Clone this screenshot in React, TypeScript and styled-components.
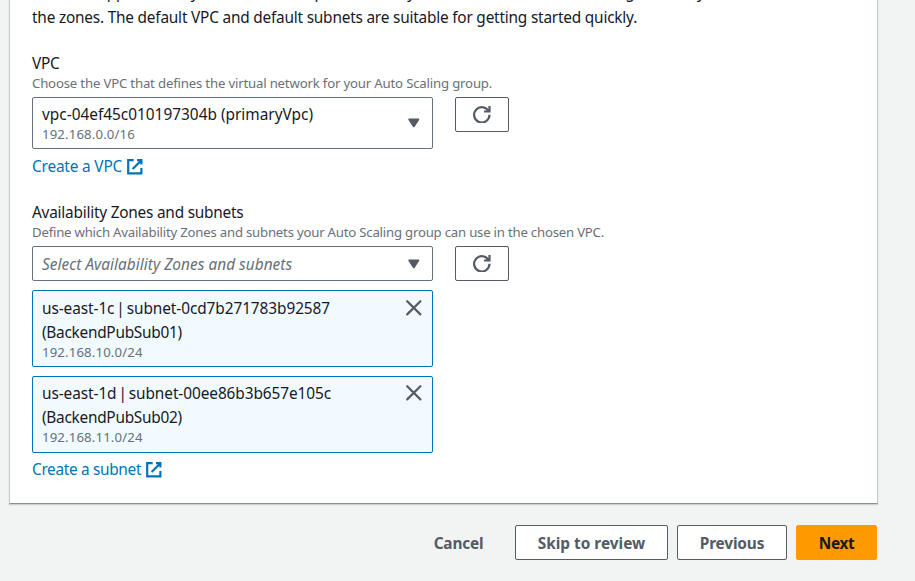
import React from 'react';
import styled, { createGlobalStyle } from 'styled-components';

const GlobalStyle = createGlobalStyle`
  *, *::before, *::after { box-sizing: border-box; }
  body {
    margin: 0;
    background: #f2f3f3;
    color: #16191f;
    font: 15.4px/24px 'Noto Sans', 'Open Sans', sans-serif;
    overflow: hidden;
  }
`;

const Page = styled.div`
  width: 915px;
  height: 581px;
  padding: 0 37px 0 9px;
  overflow: hidden;
`;

const Card = styled.section`
  height: 504px;
  padding: 0 22px;
  background: #fff;
  border: solid #c5cacd;
  border-width: 0 1px 1px;
  border-bottom-color: #879196;
  box-shadow: 0 1px 1px rgba(0, 28, 36, 0.16);
  display: flex;
  flex-direction: column;
`;

const Intro = styled.p`
  margin: -19px 0 22px;
  display: flex;
  flex-direction: column;
  gap: 1px;
  white-space: nowrap;
  letter-spacing: -0.21px;
`;

const Field = styled.div<{ $spaceAfter?: number }>`
  display: flex;
  flex-direction: column;
  white-space: nowrap;
  margin-bottom: ${(p) => p.$spaceAfter ?? 0}px;
`;

const Label = styled.label`
  line-height: 24px;
  margin-bottom: -2px;
  letter-spacing: -0.23px;
`;

const Description = styled.div<{ $tracking: number }>`
  font-size: 13.2px;
  line-height: 18px;
  letter-spacing: ${(p) => p.$tracking}px;
  color: #687078;
  margin-bottom: 5px;
`;

const ControlRow = styled.div`
  display: flex;
  align-items: flex-start;
  gap: 22px;
`;

const Select = styled.div<{ $height: number }>`
  width: 401px;
  height: ${(p) => p.$height}px;
  padding: 0 9px;
  border: 1px solid #687078;
  border-radius: 2px;
  background: #fff;
  display: flex;
  align-items: center;
  justify-content: space-between;
`;

const Selected = styled.div`
  display: flex;
  flex-direction: column;
  line-height: 23px;
`;

const Secondary = styled.span<{ $leading?: number }>`
  font-size: 13.2px;
  line-height: ${(p) => p.$leading ?? 17}px;
  letter-spacing: 0.14px;
  color: #687078;
`;

const Placeholder = styled.span`
  padding-top: 2px;
  font-style: italic;
  letter-spacing: 0.03px;
  color: #687078;
`;

const Button = styled.button<{ $variant?: 'normal' | 'link' | 'primary'; $width: number; $tracking?: number }>`
  width: ${(p) => p.$width}px;
  height: 35px;
  padding: 2px 0 0;
  display: flex;
  align-items: center;
  justify-content: center;
  font: bold 15.4px/24px 'Noto Sans', 'Open Sans', sans-serif;
  letter-spacing: ${(p) => p.$tracking ?? 0}px;
  white-space: nowrap;
  color: ${(p) => (p.$variant === 'primary' ? '#16191f' : '#545b64')};
  background: ${(p) => (p.$variant === 'primary' ? '#ff9900' : p.$variant === 'link' ? 'transparent' : '#fff')};
  border: 1px solid
    ${(p) => (p.$variant === 'primary' ? '#ff9900' : p.$variant === 'link' ? 'transparent' : '#545b64')};
  border-radius: 2px;
`;

const IconButton = styled(Button)`
  padding: 0;
`;

const Link = styled.a<{ $tracking: number }>`
  margin-top: 6px;
  align-self: flex-start;
  display: flex;
  gap: 4px;
  color: #0073bb;
  letter-spacing: ${(p) => p.$tracking}px;
`;

const TokenList = styled.div`
  padding-top: 9.4px;
  height: 171px;
  display: flex;
  flex-direction: column;
  gap: 8.8px;
`;

const Token = styled.div`
  width: 401px;
  height: 76.8px;
  flex: none;
  padding: 5.4px 9px 0;
  display: flex;
  justify-content: space-between;
  background: #f1faff;
  border: 1px solid #0073bb;
  border-radius: 2px;
`;

const TokenText = styled.div`
  display: flex;
  flex-direction: column;
`;

const TokenName = styled.span<{ $tracking?: number }>`
  letter-spacing: ${(p) => p.$tracking ?? -0.08}px;
  word-spacing: -2px;
`;

const Icon = styled.svg`
  width: 17.6px;
  height: 17.6px;
  flex: none;
  fill: none;
  stroke: currentColor;
  stroke-width: 2;
`;

const ControlIcon = styled(Icon)`
  color: #545b64;
`;

const ExternalMark = styled(Icon)`
  margin-top: 2.6px;
`;

const CloseMark = styled(Icon)`
  color: #545b64;
  margin-top: 2px;
`;

const Actions = styled.footer`
  padding: 21px 1px 0 0;
  display: flex;
  justify-content: flex-end;
  gap: 9px;
`;

const ExternalIcon = () => (
  <ExternalMark viewBox="0 0 16 16">
    <path d="M10 2h4v4M6 10l8-8M14 9.05V14H2V2h5" />
  </ExternalMark>
);

const CaretIcon = () => (
  <ControlIcon viewBox="0 0 16 16">
    <path d="M4 5h8l-4 6z" fill="currentColor" strokeLinejoin="round" />
  </ControlIcon>
);

const RefreshButton = () => (
  <IconButton $width={54} aria-label="Refresh">
    <Icon viewBox="0 0 16 16">
      <path d="M10 5h5V0M15 8a7 7 0 1 1-.7-3" />
    </Icon>
  </IconButton>
);

const subnets = [
  { id: 'us-east-1c | subnet-0cd7b271783b92587', name: '(BackendPubSub01)', cidr: '192.168.10.0/24' },
  { id: 'us-east-1d | subnet-00ee86b3b657e105c', name: '(BackendPubSub02)', cidr: '192.168.11.0/24' },
];

export default function App() {
  return (
    <Page>
      <GlobalStyle />
      <Card>
        <Intro>
          <span>For most applications, you can use multiple Availability Zones and let EC2 Auto Scaling balance your instances across</span>
          <span>the zones. The default VPC and default subnets are suitable for getting started quickly.</span>
        </Intro>
        <Field $spaceAfter={22}>
          <Label>VPC</Label>
          <Description $tracking={-0.18}>Choose the VPC that defines the virtual network for your Auto Scaling group.</Description>
          <ControlRow>
            <Select $height={52}>
              <Selected>
                <span>vpc-04ef45c010197304b (primaryVpc)</span>
                <Secondary>192.168.0.0/16</Secondary>
              </Selected>
              <CaretIcon />
            </Select>
            <RefreshButton />
          </ControlRow>
          <Link $tracking={-0.18}>
            Create a VPC
            <ExternalIcon />
          </Link>
        </Field>
        <Field>
          <Label>Availability Zones and subnets</Label>
          <Description $tracking={-0.215}>Define which Availability Zones and subnets your Auto Scaling group can use in the chosen VPC.</Description>
          <ControlRow>
            <Select $height={35}>
              <Placeholder>Select Availability Zones and subnets</Placeholder>
              <CaretIcon />
            </Select>
            <RefreshButton />
          </ControlRow>
          <TokenList>
            {subnets.map((s) => (
              <Token key={s.id}>
                <TokenText>
                  <TokenName>{s.id}</TokenName>
                  <TokenName $tracking={-0.27}>{s.name}</TokenName>
                  <Secondary $leading={15}>{s.cidr}</Secondary>
                </TokenText>
                <CloseMark viewBox="0 0 16 16">
                  <path d="M2 2l12 12M14 2L2 14" strokeLinecap="round" />
                </CloseMark>
              </Token>
            ))}
          </TokenList>
          <Link $tracking={-0.33}>
            Create a subnet
            <ExternalIcon />
          </Link>
        </Field>
      </Card>
      <Actions>
        <Button $variant="link" $width={95} $tracking={-0.2}>Cancel</Button>
        <Button $width={153}>Skip to review</Button>
        <Button $width={110} $tracking={-0.15}>Previous</Button>
        <Button $variant="primary" $width={81} $tracking={-0.4}>Next</Button>
      </Actions>
    </Page>
  );
}
